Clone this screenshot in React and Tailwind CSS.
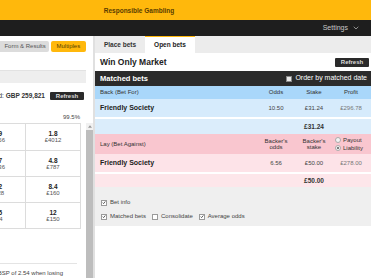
import { ChevronDown } from 'lucide-react';

function Box({ checked }) {
  return (
    <span className="inline-flex h-[6px] w-[6px] items-center justify-center border border-[#9a9a9a] bg-white">
      {checked && (
        <svg viewBox="0 0 6 6" className="h-[5px] w-[5px]">
          <path d="M1 3.2 L2.4 4.6 L5 1.4" fill="none" stroke="#222" strokeWidth="1.1" />
        </svg>
      )}
    </span>
  );
}

function Radio({ on }) {
  return (
    <span className="inline-flex h-[6px] w-[6px] items-center justify-center rounded-full border border-[#aaa] bg-[#f4f4f4]">
      {on && <span className="h-[2px] w-[2px] rounded-full bg-[#555]" />}
    </span>
  );
}

const leftRows = [
  ['2.9', '£4.56', '1.8', '£4012'],
  ['3.7', '£2.36', '4.8', '£787'],
  ['5.2', '£128', '8.4', '£160'],
  ['7.5', '£84', '12', '£150'],
];

export default function App() {
  return (
    <div className="flex h-[278px] w-[371px] flex-col overflow-hidden bg-white font-['Liberation_Sans',Arial,sans-serif] text-[#222]">
      {/* top strip */}
      <div className="flex h-[20px] items-end justify-center bg-[#ffb80c] pb-[4px] pr-[93px]">
        <span className="text-[6.5px] font-bold text-[#5a3d00]">Responsible Gambling</span>
      </div>
      <div className="flex h-[17px] items-center justify-end gap-[4px] bg-[#1e1e1e] pr-[11px]">
        <span className="text-[7px] text-[#c8c8c8]">Settings</span>
        <ChevronDown className="h-[8px] w-[8px] text-[#c8c8c8]" strokeWidth={2} />
      </div>

      <div className="flex flex-1">
        {/* left panel */}
        <div className="flex w-[93px]">
          <div className="flex w-[86px] flex-col overflow-hidden">
            <div className="flex gap-[2px] pt-[5px]">
              <span className="flex h-[11px] w-[51px] items-center justify-end rounded-r-[2px] bg-[#dcdcdc] pr-[3px] text-[6px] text-[#555] whitespace-nowrap">Form &amp; Results</span>
              <span className="flex h-[11px] w-[37px] items-center justify-center rounded-[2px] bg-[#ffb80c] text-[6px] text-[#5a4000]">Multiples</span>
            </div>
            <div className="mt-[18px] h-[13px] border-t border-[#e2e2e2] bg-[#eeeeee]" />
            <div className="mt-[9px] flex h-[8px] items-center justify-end gap-[5px] pr-[2px] whitespace-nowrap">
              <span className="text-[6.5px] text-[#333]">Matched: <b>GBP 259,821</b></span>
              <span className="flex h-[8px] w-[34px] shrink-0 items-center justify-center rounded-[1px] bg-[#2a2a2a] text-[6px] font-bold text-[#ddd]">Refresh</span>
            </div>
            <div className="mt-[14px] pr-[6px] text-right text-[6px] leading-[6px] text-[#444]">99.5%</div>
            <div className="mt-[3px] flex justify-end pr-[5px]">
              <div className="w-[112px] shrink-0 border border-[#dcdcdc]">
                {leftRows.map((r, i) => (
                  <div key={i} className={`flex h-[26px] ${i > 0 ? 'border-t border-[#dcdcdc]' : ''}`}>
                    <div className="flex w-[56px] flex-col items-center justify-center border-r border-[#dcdcdc] leading-[7px]">
                      <span className="text-[6.5px] font-bold">{r[0]}</span>
                      <span className="text-[6px] text-[#555]">{r[1]}</span>
                    </div>
                    <div className="flex flex-1 flex-col items-center justify-center leading-[7px]">
                      <span className="text-[6.5px] font-bold">{r[2]}</span>
                      <span className="text-[6px] text-[#555]">{r[3]}</span>
                    </div>
                  </div>
                ))}
              </div>
            </div>
            <div className="mt-[34px] mr-[9px] border-t border-[#e4e4e4]" />
            <div className="mt-[5px] flex justify-end pr-[23px] whitespace-nowrap text-[6px] text-[#444]">
              <span>with a BSP of 2.54 when losing</span>
            </div>
          </div>
          {/* scrollbar */}
          <div className="flex w-[7px] flex-col pt-[87px]">
            <div className="flex h-[7px] items-center justify-center bg-[#f1f1f1]">
              <svg viewBox="0 0 6 4" className="h-[3px] w-[4px]">
                <path d="M0 4 L3 0 L6 4 Z" fill="#999" />
              </svg>
            </div>
            <div className="flex-1 bg-[#bdbdbd]" />
          </div>
        </div>
        <div className="w-[2px] bg-[#e0e0e0]" />

        {/* right panel */}
        <div className="flex flex-1 flex-col">
          <div className="flex h-[17px] bg-[#ececec]">
            <span className="flex w-[50px] items-center justify-center text-[6.5px] font-bold text-[#333]">Place bets</span>
            <span className="flex w-[50px] items-center justify-center border-t-[1.5px] border-[#ffb80c] bg-white text-[6.5px] font-bold text-[#222]">Open bets</span>
          </div>
          <div className="flex h-[18px] items-center justify-between pl-[5px] pr-[2px]">
            <span className="text-[8.5px] font-bold text-[#222]">Win Only Market</span>
            <span className="flex h-[9px] w-[34px] items-center justify-center rounded-[1px] bg-[#2a2a2a] text-[6px] font-bold text-[#ddd]">Refresh</span>
          </div>
          <div className="flex h-[15px] items-center justify-between bg-[#2b2b2b] pl-[5px] pr-[4px]">
            <span className="text-[7.5px] font-bold text-white">Matched bets</span>
            <span className="flex items-center gap-[3px] text-[7px] text-white">
              <span className="h-[6px] w-[6px] border border-[#888] bg-[#e8e8e8]" />
              Order by matched date
            </span>
          </div>

          {/* back */}
          <div className="flex h-[13px] items-center bg-[#a9d7fa] pl-[5px] text-[6px] text-[#333]">
            <span className="flex-1">Back (Bet For)</span>
            <span className="w-[38px] text-center">Odds</span>
            <span className="w-[38px] text-center">Stake</span>
            <span className="w-[38px] pr-[2px] text-center">Profit</span>
          </div>
          <div className="flex h-[18px] items-center bg-[#d6ebfc] pl-[5px] text-[6px] text-[#444]">
            <span className="flex-1 text-[7px] font-bold text-[#222]">Friendly Society</span>
            <span className="w-[38px] text-center">10.50</span>
            <span className="w-[38px] text-center">£31.24</span>
            <span className="w-[38px] pr-[2px] text-center text-[#777]">£296.78</span>
          </div>
          <div className="mt-[2px] flex h-[15px] items-center bg-[#dbedfb] text-[6.5px] font-bold text-[#333]">
            <span className="flex-1" />
            <span className="w-[38px] text-center">£31.24</span>
            <span className="w-[38px]" />
          </div>

          {/* lay */}
          <div className="flex h-[20px] items-center bg-[#f9c6cf] pl-[5px] text-[6px] leading-[6px] text-[#333]">
            <span className="flex-1">Lay (Bet Against)</span>
            <span className="w-[38px] text-center">Backer's<br />odds</span>
            <span className="w-[38px] text-center">Backer's<br />stake</span>
            <span className="flex w-[38px] flex-col gap-[2px] pl-[2px]">
              <span className="flex items-center gap-[2px]"><Radio /> Payout</span>
              <span className="flex items-center gap-[2px]"><Radio on /> Liability</span>
            </span>
          </div>
          <div className="flex h-[18px] items-center bg-[#fde3e8] pl-[5px] text-[6px] text-[#444]">
            <span className="flex-1 text-[7px] font-bold text-[#222]">Friendly Society</span>
            <span className="w-[38px] text-center">6.56</span>
            <span className="w-[38px] text-center">£50.00</span>
            <span className="w-[38px] pr-[2px] text-center text-[#777]">£278.00</span>
          </div>
          <div className="mt-[2px] flex h-[13px] items-center bg-[#fde6ea] text-[6.5px] font-bold text-[#333]">
            <span className="flex-1" />
            <span className="w-[38px] text-center">£50.00</span>
            <span className="w-[38px]" />
          </div>

          {/* options */}
          <div className="flex h-[39px] flex-col gap-[5px] bg-[#efefef] pl-[6px] pt-[11px] text-[6px] text-[#444]">
            <span className="flex items-center gap-[3px]"><Box checked /> Bet info</span>
            <div className="flex items-center gap-[6px]">
              <span className="flex items-center gap-[3px]"><Box checked /> Matched bets</span>
              <span className="flex items-center gap-[3px]"><Box /> Consolidate</span>
              <span className="flex items-center gap-[3px]"><Box checked /> Average odds</span>
            </div>
          </div>
          <div className="flex-1 bg-white" />
        </div>
      </div>
    </div>
  );
}
